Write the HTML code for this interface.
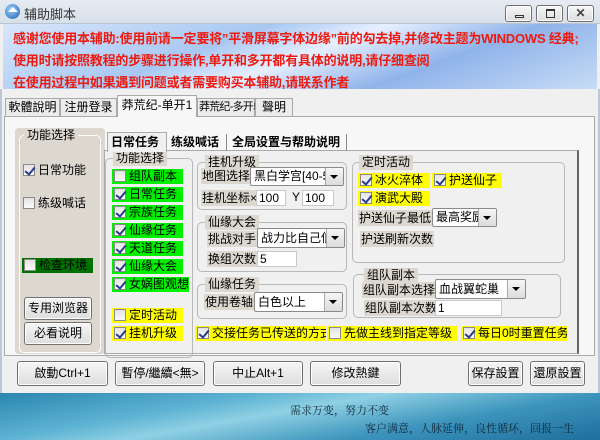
<!DOCTYPE html>
<html><head><meta charset="utf-8"><style>
*{box-sizing:border-box;margin:0;padding:0;white-space:nowrap}
body{width:600px;height:440px;position:relative;overflow:hidden;background:#f0f0f0;font-family:"Liberation Sans","Noto Sans CJK SC",sans-serif;font-size:12px;color:#000}
.a{position:absolute}
.cb{position:absolute;width:12px;height:12px;border:1px solid #8a8a8a;background:linear-gradient(#e4e4e4,#fafafa)}
.cb.c::after{content:"";position:absolute;left:3px;top:0px;width:4px;height:8px;border:solid #2a3a8a;border-width:0 2px 2px 0;transform:rotate(40deg)}
.g{background:#00f000}.y{background:#ffff00}
.it{position:absolute;height:15px;font-size:12px;line-height:15px;padding-left:17px;overflow:hidden}
.it .cb{left:2px;top:1px}
.grp{position:absolute;border:1px solid #b8b8b8;border-radius:5px}
.gl{position:absolute;background:#dcd8d0;font-size:12px;line-height:15px;padding:0 3px}
.sel{position:absolute;background:#fff;border:1px solid #8a8a8a;border-radius:2px;font-size:12px;line-height:16px;padding-left:3px;overflow:hidden}
.sel::after{content:"";position:absolute;right:0;top:0;bottom:0;width:17px;background:linear-gradient(#f6f6f6,#dcdcdc);border-left:1px solid #aaa}
.sel i{position:absolute;right:5px;top:50%;margin-top:-2px;border:4px solid transparent;border-top:4px solid #000;border-bottom:0;z-index:2}
.inp{position:absolute;background:#fff;border:1px solid #c8c8c8;font-size:12px;line-height:14px;padding-left:2px}
.btn{position:absolute;border:1px solid #707070;border-radius:3px;background:linear-gradient(#f6f6f6,#dddddd);text-align:center;font-size:12px;box-shadow:inset 0 0 0 1px #fff}
.lbl{position:absolute;font-size:12px;line-height:16px;background:#dcd8d0;padding:0 1px}
.red{position:absolute;left:13px;color:#ee1a10;font-weight:bold;font-size:13px;letter-spacing:-0.2px}
.tab{position:absolute;border:1px solid #aaa;border-bottom:0;font-size:12px;line-height:17px;background:#ececec;text-align:center}
</style></head><body>
<div class="a" style="left:0;top:0;width:600px;height:24px;background:linear-gradient(#e6ebf2,#d8e0ea);border-bottom:1px solid #b9c4d2"></div>
<div class="a" style="left:5px;top:4px;width:15px;height:15px;border-radius:50%;background:radial-gradient(circle at 40% 35%,#9fd0ff,#1a5fb0)"></div>
<div class="a" style="left:8px;top:7px;width:0;height:0;border:5px solid transparent;border-bottom:5px solid #fff;border-top:0"></div>
<div class="a" style="left:24px;top:4px;font-size:13px;color:#333">辅助脚本</div>
<div class="btn" style="left:505px;top:5px;width:27px;height:17px"><div class="a" style="left:9px;top:9px;width:9px;height:3px;border:1px solid #333"></div></div>
<div class="btn" style="left:536px;top:5px;width:27px;height:17px"><div class="a" style="left:9px;top:3px;width:9px;height:9px;border:1px solid #333;border-top-width:2px"></div></div>
<div class="btn" style="left:567px;top:5px;width:27px;height:17px;font-weight:bold;line-height:15px;color:#444">✕</div>
<div class="a" style="left:3px;top:24px;width:594px;height:65px;background:linear-gradient(160deg,#d8e6fb 0%,#a8c8f2 35%,#e6efff 50%,#8fb3ea 70%,#c8dcf6 100%)"></div>
<div class="red" style="top:28px">感谢您使用本辅助:使用前请一定要将”平滑屏幕字体边缘”前的勾去掉,并修改主题为WINDOWS 经典;</div>
<div class="red" style="top:50px">使用时请按照教程的步骤进行操作,单开和多开都有具体的说明,请仔细查阅</div>
<div class="red" style="top:72px">在使用过程中如果遇到问题或者需要购买本辅助,请联系作者</div>
<div class="a" style="left:0;top:89px;width:600px;height:306px;background:#f0f0f0;border-left:2px solid #bcc8d6;border-right:2px solid #bcc8d6"></div>
<div class="tab" style="left:5px;top:98px;width:55px;height:18px">軟體說明</div>
<div class="tab" style="left:60px;top:98px;width:57px;height:18px">注册登录</div>
<div class="tab" style="left:117px;top:95px;width:80px;height:22px;line-height:19px;background:#f7f7f7;z-index:2">莽荒纪-单开1</div>
<div class="tab" style="left:197px;top:98px;width:58px;height:18px;font-size:11px;letter-spacing:-0.8px;overflow:visible;text-align:left;padding-left:1px">莽荒纪-多开单停</div>
<div class="tab" style="left:255px;top:98px;width:38px;height:18px">聲明</div>
<div class="a" style="left:4px;top:116px;width:591px;height:240px;border:1px solid #aaa;background:#f7f7f7"></div>
<div class="a" style="left:15px;top:128px;width:90px;height:226px;background:#dcd8d0;border-radius:4px"></div>
<div class="grp" style="left:19px;top:135px;width:82px;height:218px;border-color:#fff"></div>
<div class="gl" style="left:24px;top:128px">功能选择</div>
<div class="it" style="left:21px;top:163px">日常功能<div class="cb c"></div></div>
<div class="it" style="left:21px;top:196px">练级喊话<div class="cb"></div></div>
<div class="it" style="left:22px;top:258px;width:71px;background:#007000">检查环境<div class="cb"></div></div>
<div class="btn" style="left:24px;top:297px;width:68px;height:23px;line-height:21px">专用浏览器</div>
<div class="btn" style="left:24px;top:322px;width:68px;height:23px;line-height:21px">必看说明</div>
<div class="a" style="left:104px;top:150px;width:475px;height:204px;background:#f0f0f0;border:1px solid #aaa;border-right:2px solid #666"></div>
<div class="a" style="left:107px;top:132px;width:60px;height:20px;border:1px solid #aaa;border-bottom:0;background:#f0f0f0;font-weight:bold;font-size:12px;line-height:19px;padding-left:3px;z-index:2">日常任务</div>
<div class="a" style="left:167px;top:134px;width:60px;height:17px;border-right:1px solid #888;font-weight:bold;font-size:12px;line-height:17px;padding-left:4px">练级喊话</div>
<div class="a" style="left:227px;top:134px;width:120px;height:17px;border-right:1px solid #888;font-weight:bold;font-size:12px;line-height:17px;padding-left:5px">全局设置与帮助说明</div>
<div class="grp" style="left:105px;top:158px;width:88px;height:200px"></div>
<div class="gl" style="left:113px;top:151px">功能选择</div>
<div class="it g" style="left:112px;top:169px;width:71px">组队副本<div class="cb"></div></div>
<div class="it g" style="left:112px;top:187px;width:71px">日常任务<div class="cb c"></div></div>
<div class="it g" style="left:112px;top:205px;width:71px">宗族任务<div class="cb c"></div></div>
<div class="it g" style="left:112px;top:223px;width:71px">仙缘任务<div class="cb c"></div></div>
<div class="it g" style="left:112px;top:241px;width:71px">天道任务<div class="cb c"></div></div>
<div class="it g" style="left:112px;top:259px;width:71px">仙缘大会<div class="cb c"></div></div>
<div class="it g" style="left:112px;top:277px;width:77px">女娲图观想<div class="cb c"></div></div>
<div class="it y" style="left:112px;top:308px;width:71px">定时活动<div class="cb"></div></div>
<div class="it y" style="left:112px;top:326px;width:71px">挂机升级<div class="cb c"></div></div>
<div class="grp" style="left:197px;top:162px;width:150px;height:48px"></div>
<div class="gl" style="left:205px;top:155px">挂机升级</div>
<div class="lbl" style="left:201px;top:168px">地图选择</div>
<div class="sel" style="left:250px;top:167px;width:94px;height:19px">黑白学宫[40-5(<i></i></div>
<div class="lbl" style="left:201px;top:190px">挂机坐标×</div>
<div class="inp" style="left:256px;top:190px;width:30px;height:16px">100</div>
<div class="a" style="left:292px;top:190px;font-size:12px">Y</div>
<div class="inp" style="left:302px;top:190px;width:32px;height:16px">100</div>
<div class="grp" style="left:197px;top:222px;width:150px;height:50px"></div>
<div class="gl" style="left:205px;top:215px">仙缘大会</div>
<div class="lbl" style="left:207px;top:231px">挑战对手</div>
<div class="sel" style="left:257px;top:228px;width:88px;height:20px;line-height:18px">战力比自己低<i></i></div>
<div class="lbl" style="left:207px;top:251px">换组次数</div>
<div class="inp" style="left:257px;top:251px;width:40px;height:16px">5</div>
<div class="grp" style="left:197px;top:284px;width:150px;height:35px"></div>
<div class="gl" style="left:205px;top:277px">仙缘任务</div>
<div class="lbl" style="left:204px;top:294px">使用卷轴</div>
<div class="sel" style="left:254px;top:292px;width:89px;height:20px;line-height:18px">白色以上<i></i></div>
<div class="grp" style="left:352px;top:162px;width:213px;height:101px"></div>
<div class="gl" style="left:359px;top:155px">定时活动</div>
<div class="it y" style="left:358px;top:173px;width:72px">冰火淬体<div class="cb c"></div></div>
<div class="it y" style="left:432px;top:173px;width:70px">护送仙子<div class="cb c"></div></div>
<div class="it y" style="left:358px;top:191px;width:72px">演武大殿<div class="cb c"></div></div>
<div class="lbl" style="left:358px;top:210px">护送仙子最低</div>
<div class="sel" style="left:432px;top:208px;width:65px;height:19px;line-height:17px">最高奖励<i></i></div>
<div class="lbl" style="left:360px;top:231px">护送刷新次数</div>
<div class="grp" style="left:353px;top:274px;width:208px;height:44px"></div>
<div class="gl" style="left:364px;top:268px">组队副本</div>
<div class="lbl" style="left:362px;top:282px">组队副本选择</div>
<div class="sel" style="left:435px;top:279px;width:91px;height:20px;line-height:18px">血战翼蛇巢<i></i></div>
<div class="lbl" style="left:364px;top:300px">组队副本次数</div>
<div class="inp" style="left:435px;top:300px;width:67px;height:16px">1</div>
<div class="it y" style="left:195px;top:326px;width:131px">交接任务已传送的方式<div class="cb c"></div></div>
<div class="it y" style="left:327px;top:326px;width:130px">先做主线到指定等级<div class="cb"></div></div>
<div class="it y" style="left:461px;top:326px;width:106px">每日0时重置任务<div class="cb c"></div></div>
<div class="btn" style="left:17px;top:361px;width:91px;height:25px;line-height:23px">啟動Ctrl+1</div>
<div class="btn" style="left:115px;top:361px;width:90px;height:25px;line-height:23px">暫停/繼續&lt;無&gt;</div>
<div class="btn" style="left:213px;top:361px;width:90px;height:25px;line-height:23px">中止Alt+1</div>
<div class="btn" style="left:310px;top:361px;width:91px;height:25px;line-height:23px">修改熱鍵</div>
<div class="btn" style="left:468px;top:361px;width:55px;height:25px;line-height:23px">保存設置</div>
<div class="btn" style="left:530px;top:361px;width:55px;height:25px;line-height:23px">還原設置</div>
<div class="a" style="left:0;top:393px;width:600px;height:47px;background:linear-gradient(170deg,#2a86b0 0%,#5cb2d2 30%,#8fd0e4 45%,#3c94bc 70%,#1f6e9c 100%)"></div>
<div class="a" style="left:290px;top:402px;font-size:11px;font-family:'Noto Serif CJK SC',serif;color:#102838">需求万变，努力不变</div>
<div class="a" style="left:365px;top:420px;font-size:11px;font-family:'Noto Serif CJK SC',serif;color:#102838">客户满意，人脉延伸，良性循环，回报一生</div>
</body></html>
